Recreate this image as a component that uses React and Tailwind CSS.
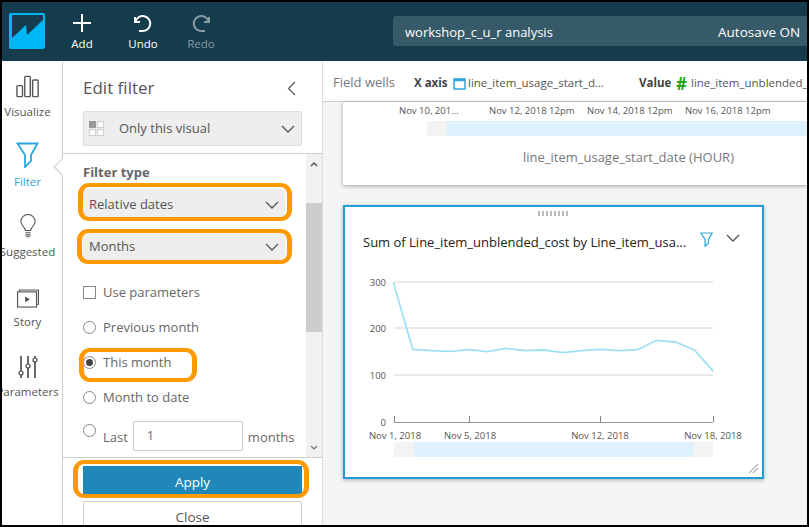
const pts = [[190,67],[248,268],[305,272],[360,274],[417,269],[472,275],[528,265],[585,272],[642,270],[698,278],[755,272],[811,268],[867,272],[923,269],[980,241],[1036,246],[1093,270],[1150,334]]
  .map(([x,y]) => `${(x/3+330).toFixed(1)},${(y/3+260).toFixed(1)}`).join(" ");

function Chevron({ className = "", color = "#555" }) {
  return (
    <svg width="14" height="8" viewBox="0 0 14 8" className={className}>
      <path d="M1 1l6 6 6-6" fill="none" stroke={color} strokeWidth="1.3" />
    </svg>
  );
}

function FilterIcon({ w = 23, h = 26, color = "#2ba6dc", sw = 1.8 }) {
  return (
    <svg width={w} height={h} viewBox="0 0 23 26">
      <path d="M1.500 1.500H21.500L15 13V19L9 25V13Z" fill="none" stroke={color} strokeWidth={sw} />
    </svg>
  );
}

function RailItem({ label, icon, active }) {
  return (
    <div className="w-[51px] h-[70px] flex flex-col items-center shrink-0">
      <div className="h-[28px] flex items-end justify-center">{icon}</div>
      <div className={`mt-[6px] text-[11.5px] leading-[16px] whitespace-nowrap ${active ? "text-[#2ba6dc]" : "text-[#555]"}`}>{label}</div>
    </div>
  );
}

function Radio({ checked }) {
  return (
    <span className="w-[13px] h-[13px] rounded-full border border-[#888] bg-white flex items-center justify-center shrink-0">
      {checked && <span className="w-[7px] h-[7px] rounded-full bg-[#444]" />}
    </span>
  );
}

function Ring({ className }) {
  return <div className={`absolute border-y-[4px] border-x-[5px] border-[#ff9900] pointer-events-none ${className}`} />;
}

export default function App() {
  return (
    <div className="relative w-[809px] h-[527px] bg-black p-[2px] overflow-hidden" style={{ fontFamily: '"Open Sans", "Noto Sans", sans-serif' }}>
      <div className="w-[805px] h-[523px] flex flex-col bg-white overflow-hidden">
        {/* top bar */}
        <header className="h-[59px] shrink-0 bg-[#143c4d] flex items-start text-white">
          <div className="w-[36px] h-[36px] ml-[7px] mt-[11px] rounded-[2px] bg-[#00b7f5] shrink-0">
            <svg width="36" height="36" viewBox="0 0 36 36">
              <path d="M3 2H34V7L18 22L17 12L3 25Z" fill="#143c4d" />
            </svg>
          </div>
          <div className="w-[44px] ml-[15px] mt-[11px] flex flex-col items-center shrink-0">
            <svg width="20" height="20" viewBox="0 0 20 20"><path d="M10 1v18M1 10h18" stroke="#fff" strokeWidth="2" /></svg>
            <span className="text-[11.5px] leading-[16px] mt-[3px]">Add</span>
          </div>
          <div className="w-[44px] ml-[17px] mt-[11px] flex flex-col items-center shrink-0">
            <svg width="20" height="20" viewBox="0 0 20 20"><path d="M2 4v5h5M2.500 8.500A7.500 7.500 0 1 1 9 18H6" fill="none" stroke="#fff" strokeWidth="2" /></svg>
            <span className="text-[11.5px] leading-[16px] mt-[3px]">Undo</span>
          </div>
          <div className="w-[44px] ml-[14px] mt-[11px] flex flex-col items-center shrink-0">
            <svg width="20" height="20" viewBox="0 0 20 20"><path d="M18 4v5h-5M17.500 8.500A7.500 7.500 0 1 0 11 18h3" fill="none" stroke="#8a9aa2" strokeWidth="2" /></svg>
            <span className="text-[11.5px] leading-[16px] mt-[3px] text-[#8a9aa2]">Redo</span>
          </div>
          <div className="ml-[170px] mt-[14px] flex-1 h-[30px] pt-[3px] bg-[#375a69] rounded-l-[3px] flex items-center pl-[12px] overflow-hidden whitespace-nowrap">
            <span className="text-[13px] w-[313px] shrink-0">workshop_c_u_r analysis</span>
            <span className="text-[13.5px] shrink-0">Autosave ON</span>
            <Chevron className="ml-[6px] shrink-0" color="#fff" />
          </div>
        </header>

        <div className="flex flex-1 min-h-0 mt-[1px]">
          {/* rail */}
          <nav className="w-[61px] shrink-0 border-r border-[#ccc] flex flex-col pt-[8px] overflow-hidden bg-white">
            <RailItem label="Visualize" icon={
              <svg width="24" height="23" viewBox="0 0 26 24" fill="none" stroke="#555" strokeWidth="1.500">
                <rect x="1" y="11" width="6" height="12" rx="1" /><rect x="9.500" y="1" width="6" height="22" rx="1" /><rect x="18" y="5" width="6" height="18" rx="1" />
              </svg>} />
            <RailItem active label="Filter" icon={<FilterIcon />} />
            <RailItem label="Suggested" icon={
              <svg width="16" height="24" viewBox="0 0 18 26" fill="none" stroke="#555" strokeWidth="1.200">
                <path d="M6 18c0-4-5-5-5-10a8 8 0 0 1 16 0c0 5-5 6-5 10zM6 20.500h6M6 23h6M7 25h4" />
              </svg>} />
            <RailItem label="Story" icon={
              <svg width="24" height="19" viewBox="0 0 24 20" fill="none" stroke="#555" strokeWidth="1.200">
                <path d="M3 3V1h20v15h-2" /><rect x="1" y="3" width="20" height="16" /><path d="M9 8l5 3-5 3z" fill="#555" stroke="none" />
              </svg>} />
            <RailItem label="Parameters" icon={
              <svg width="20" height="22" viewBox="0 0 20 22" fill="none" stroke="#444" strokeWidth="1.600">
                <path d="M3 0v15M3 19v3M10 0v8M10 12v10M17 0v2M17 6v16" /><circle cx="3" cy="17" r="2" strokeWidth="1.200" /><circle cx="10" cy="10" r="2" strokeWidth="1.200" /><circle cx="17" cy="4" r="2" strokeWidth="1.200" />
              </svg>} />
          </nav>

          {/* panel */}
          <aside className="relative w-[260px] shrink-0 border-r border-[#ddd] flex flex-col text-[#555] bg-white">
            <div className="h-[92px] shrink-0 pl-[20px] border-b border-[#ccc]">
              <div className="flex items-center justify-between h-[49px] pr-[26px] pt-[3px]">
                <span className="text-[17px] leading-[24px] text-[#555]">Edit filter</span>
                <svg width="9" height="15" viewBox="0 0 9 15"><path d="M8 1L1.500 7.500 8 14" fill="none" stroke="#555" strokeWidth="1.200" /></svg>
              </div>
              <div className="w-[219px] h-[35px] bg-[#eee] border border-[#ddd] rounded-[2px] flex items-center pl-[5px] pr-[6px]">
                <span className="w-[15px] h-[15px] grid grid-cols-2 gap-[1px] shrink-0">
                  <span className="bg-[#999]" /><span className="bg-white border border-[#ccc]" /><span className="bg-white border border-[#ccc]" /><span className="bg-white border border-[#ccc]" />
                </span>
                <span className="ml-[15px] text-[13px] flex-1">Only this visual</span>
                <Chevron />
              </div>
            </div>
            <div className="flex flex-1 min-h-0">
              <div className="flex-1 pl-[20px] pt-[9px] overflow-hidden">
                <div className="text-[13px] leading-[18px] font-bold text-[#666]">Filter type</div>
                <div className="mt-[8px] w-[202px] h-[31px] bg-[#eee] flex items-center pl-[6px] pr-[6px] text-[13px]">
                  <span className="flex-1">Relative dates</span><Chevron />
                </div>
                <div className="mt-[12px] w-[202px] h-[30px] bg-[#eee] flex items-center pl-[6px] pr-[6px] text-[13px]">
                  <span className="flex-1">Months</span><Chevron />
                </div>
                <label className="mt-[13px] h-[35px] flex items-center gap-[7px] text-[13px] text-[#666]">
                  <span className="w-[13px] h-[13px] border border-[#888] bg-white shrink-0" />Use parameters
                </label>
                <div className="h-[35px] flex items-center gap-[7px] text-[13px] text-[#666]"><Radio />Previous month</div>
                <div className="h-[35px] flex items-center gap-[7px] text-[13px] text-[#666]"><Radio checked />This month</div>
                <div className="h-[35px] flex items-center gap-[7px] text-[13px] text-[#666]"><Radio />Month to date</div>
                <div className="h-[35px] flex items-center text-[13px] text-[#666]">
                  <span className="-mt-[5px]"><Radio /></span>
                  <span className="ml-[7px] mt-[10px]">Last</span>
                  <span className="ml-[5px] w-[110px] h-[30px] mt-[7px] border border-[#ccc] rounded-[2px] pl-[13px] flex items-center text-[#7b5b86] shrink-0">1</span>
                  <span className="ml-[5px] mt-[10px]">months</span>
                </div>
              </div>
              <div className="w-[16px] shrink-0 bg-[#f1f1f1] flex flex-col items-center">
                <svg width="8" height="5" viewBox="0 0 8 5" className="mt-[8px]"><path d="M1 4l3-3 3 3" fill="none" stroke="#555" strokeWidth="1.500" /></svg>
                <div className="mt-[36px] w-full h-[129px] bg-[#cdcdcd]" />
                <svg width="8" height="5" viewBox="0 0 8 5" className="mt-[113px]"><path d="M1 1l3 3 3-3" fill="none" stroke="#777" strokeWidth="1.200" /></svg>
              </div>
            </div>
            <div className="h-[68px] shrink-0 border-t border-[#ccc] pl-[20px] pt-[8px]">
              <div className="w-[219px] h-[29px] pt-[3px] bg-[#1f88b9] text-white text-[13.5px] flex items-center justify-center">Apply</div>
              <div className="mt-[6px] w-[219px] h-[30px] pt-[3px] border border-[#ccc] rounded-[2px] text-[13.5px] flex items-center justify-center">Close</div>
            </div>
            <div className="absolute left-[-7px] top-[99px] w-[12px] h-[12px] rotate-45 bg-white border-l border-b border-[#ccc]" />
          </aside>

          {/* main */}
          <main className="flex-1 min-w-0 flex flex-col bg-[#f5f5f5] overflow-hidden">
            <div className="h-[40px] shrink-0 pt-[3px] bg-white border-b border-[#ccc] flex items-center pl-[10px] whitespace-nowrap overflow-hidden">
              <span className="text-[13px] text-[#777] w-[81px] shrink-0">Field wells</span>
              <span className="text-[11.5px] font-bold text-[#444] w-[39px] shrink-0">X axis</span>
              <svg width="13" height="13" viewBox="0 0 13 13" className="shrink-0"><rect x="1" y="2" width="11" height="10" fill="none" stroke="#2ba6dc" strokeWidth="1.500" /><path d="M1 3h11" stroke="#2ba6dc" strokeWidth="2.500" /></svg>
              <span className="text-[11.5px] text-[#555] ml-[2px] w-[171px] shrink-0">line_item_usage_start_d...</span>
              <span className="text-[11.5px] font-bold text-[#444] w-[37px] shrink-0">Value</span>
              <span className="text-[17px] leading-none font-bold text-[#22a00e] w-[15px] shrink-0">#</span>
              <span className="text-[11.5px] text-[#555] shrink-0">line_item_unblended_cost</span>
            </div>
            <div className="ml-[20px] h-[83px] shrink-0 bg-white shadow-[0_1px_4px_rgba(0,0,0,0.35)] overflow-hidden whitespace-nowrap">
              <div className="flex h-[19px] items-center pl-[56px] text-[9.5px] text-[#555]">
                <span className="w-[90px] shrink-0">Nov 10, 201...</span>
                <span className="w-[98px] shrink-0">Nov 12, 2018 12pm</span>
                <span className="w-[98px] shrink-0">Nov 14, 2018 12pm</span>
                <span className="w-[98px] shrink-0">Nov 16, 2018 12pm</span>
              </div>
              <div className="flex ml-[84px] h-[15px]">
                <div className="w-[20px] bg-[#f3f3f3]" /><div className="flex-1 bg-[#dcf1fc]" />
              </div>
              <div className="mt-[12px] pl-[180px] text-[13px] leading-[18px] text-[#777]">line_item_usage_start_date (HOUR)</div>
            </div>
            <div className="relative mt-[20px] ml-[20px] w-[421px] h-[274px] shrink-0 bg-white border-2 border-[#1e9dd8] shadow-[0_1px_4px_rgba(0,0,0,0.3)]">
              <div className="flex justify-center pt-[4px] h-[10px]">
                <div className="w-[31px] h-[5px] bg-[repeating-linear-gradient(90deg,#bbb_0,#bbb_2px,transparent_2px,transparent_4px)]" />
              </div>
              <div className="flex items-center h-[45px] pl-[18px] pt-[6px]">
                <span className="w-[337px] text-[13px] text-[#222] whitespace-nowrap overflow-hidden shrink-0">Sum of Line_item_unblended_cost by Line_item_usa...</span>
                <span className="-mt-[7px]"><FilterIcon w={13} h={15} sw={2.200} /></span>
                <Chevron className="ml-[13px] -mt-[10px]" />
              </div>
              <svg width="417" height="200" viewBox="345 262 417 200" className="block" style={{ fontFamily: '"Open Sans", sans-serif' }}>
                {[282,328,375].map(y => <line key={y} x1="394" x2="713" y1={y} y2={y} stroke="#d4d4d4" />)}
                <line x1="394" x2="713" y1="422.500" y2="422.500" stroke="#999" />
                {[394,469,600,713].map(x => <line key={x} x1={x + .5} x2={x + .5} y1="416" y2="422" stroke="#888" />)}
                <polyline points={pts} fill="none" stroke="#a0e0f5" strokeWidth="1.800" />
                {[["300",285.5],["200",332],["100",379],["0",425.500]].map(([t,y]) => <text key={t} x="386" y={y} textAnchor="end" fontSize="9.500" fill="#555">{t}</text>)}
                {[["Nov 1, 2018",395],["Nov 5, 2018",470],["Nov 12, 2018",600],["Nov 18, 2018",713]].map(([t,x]) => <text key={t} x={x} y="439" textAnchor="middle" fontSize="9.500" fill="#555">{t}</text>)}
                <rect x="394" y="442" width="20" height="15" fill="#f3f3f3" />
                <rect x="414" y="442" width="279" height="15" fill="#dcf1fc" />
                <rect x="693" y="442" width="20" height="15" fill="#f3f3f3" />
              </svg>
              <svg width="9" height="9" viewBox="0 0 9 9" className="absolute right-[4px] bottom-[4px]"><path d="M0 9l9-9M4 9l5-5" stroke="#aaa" strokeWidth="1.200" /></svg>
            </div>
          </main>
        </div>
      </div>

      {/* orange annotations */}
      <Ring className="left-[78px] top-[183px] w-[214px] h-[38px] rounded-[11px]" />
      <Ring className="left-[77px] top-[229px] w-[215px] h-[35px] rounded-[11px]" />
      <Ring className="left-[79px] top-[348px] w-[118px] h-[34px] rounded-[11px]" />
      <Ring className="left-[73px] top-[460px] w-[236px] h-[38px] rounded-[11px]" />
    </div>
  );
}
